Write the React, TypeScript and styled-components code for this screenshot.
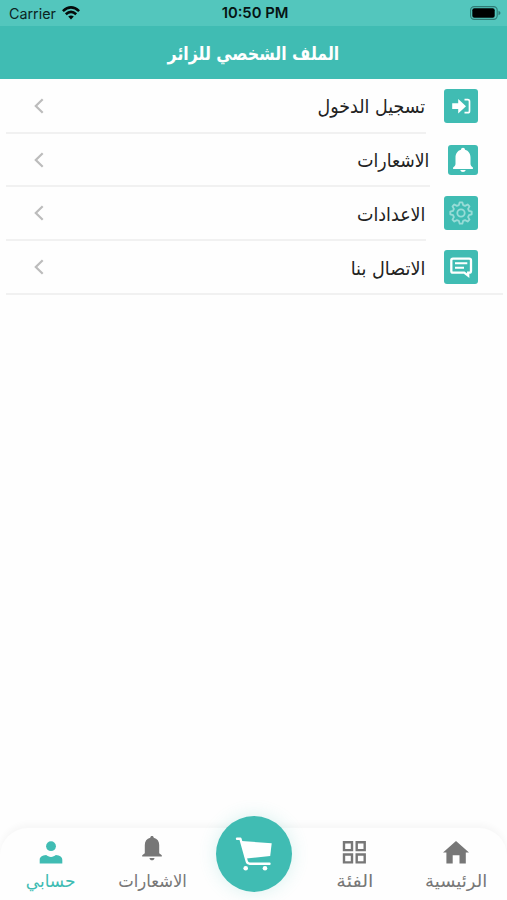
import type { ReactNode } from 'react';
import styled, { createGlobalStyle } from 'styled-components';

const TEAL = '#40bcb3';

const LoginIcon = () => (
  <svg width="34" height="34" viewBox="0 0 34 34">
    <path d="M8.200 14.200h6v-4.200l7.800 7.200-7.800 7.200v-4.300h-6z" fill="#fff" />
    <path d="M20.500 10.700h3.200q1.800 0 1.800 1.800v9.400q0 1.800-1.800 1.800h-3.200" fill="none" stroke="#fff" strokeWidth="1.700" />
  </svg>
);

const BellTileIcon = () => (
  <svg width="30" height="30" viewBox="0 0 30 30">
    <path
      d="M15 2.8c1.2 0 2 .8 2 2 3.7 1 5.5 4.1 5.5 8v6.1c0 1.5 1.2 2.5 2.4 3.6v1.5H5.1v-1.5c1.2-1.1 2.4-2.1 2.4-3.6v-6.1c0-3.9 1.8-7 5.5-8 0-1.2.8-2 2-2z"
      fill="#fff"
    />
    <path d="M12.3 25h5.4c-.3 1.2-1.3 2-2.7 2s-2.4-.8-2.7-2z" fill="#fff" />
  </svg>
);

const teeth = Array.from({ length: 8 }, (_, i) => {
  const point = (radius: number, degrees: number) => {
    const angle = ((i * 45 + degrees) * Math.PI) / 180;
    return `${(17 + radius * Math.sin(angle)).toFixed(2)},${(17 - radius * Math.cos(angle)).toFixed(2)}`;
  };
  return [point(8.2, -15), point(10.8, -7), point(10.8, 7), point(8.2, 15)].join(' ');
}).join(' ');

const GearIcon = () => (
  <svg width="34" height="34" viewBox="0 0 34 34" fill="none" stroke="#98dcd7" strokeWidth="1.8">
    <polygon points={teeth} strokeLinejoin="round" />
    <circle cx="17" cy="17" r="3.7" />
  </svg>
);

const MessageIcon = () => (
  <svg width="34" height="34" viewBox="0 0 34 34" fill="none" stroke="#fff">
    <path
      d="M9 8.700h16.300q1.700 0 1.700 1.700v10.500q0 1.700-1.700 1.700h-1.100v3l-4-3H9q-1.700 0-1.700-1.700V10.400q0-1.700 1.700-1.700z"
      strokeWidth="2.300"
    />
    <path d="M11 13.300h12.300M11 17.800h9" strokeWidth="1.900" />
  </svg>
);

const WifiIcon = () => (
  <svg width="18" height="14" viewBox="0 0 18 14" fill="none" stroke="#050b0a" strokeWidth="2.6">
    <path d="M.9 5.1q8.1-7.4 16.2 0" />
    <path d="M3.8 8.3q5.2-4.7 10.4 0" />
    <path d="M6.2 10.5q2.8-2.2 5.6 0L9 13.5z" fill="#050b0a" stroke="none" />
  </svg>
);

const BatteryIcon = () => (
  <svg width="31" height="14" viewBox="0 0 31 14">
    <rect x=".6" y=".6" width="26.6" height="12.8" rx="3.6" fill="none" stroke="#2f7b75" strokeWidth="1.1" />
    <rect x="2.3" y="2.2" width="22.4" height="9.5" rx="2" fill="#000" />
    <path d="M28.5 4.7q2 .7 2 2.3t-2 2.3z" fill="#2f7b75" />
  </svg>
);

const ChevronIcon = () => (
  <svg width="10" height="16" viewBox="0 0 10 16">
    <path d="M8.700 1.200 1.800 8l6.900 6.800" fill="none" stroke="#bcbcbc" strokeWidth="2.200" />
  </svg>
);

const HomeIcon = () => (
  <svg width="26" height="24" viewBox="0 0 26 24">
    <path d="M13 1 26 12.600h-3.200V23.500h-6.300v-8.300H9.700v8.300H3.400V12.600H0z" fill="currentColor" />
  </svg>
);

const GridIcon = () => (
  <svg width="25" height="24" viewBox="0 0 25 24" fill="none" stroke="currentColor" strokeWidth="2.4">
    <path d="M2 2.200h8v7.900H2zM14.700 2.200h8v7.900h-8zM2 14.500h8v7.900H2zM14.700 14.500h8v7.900h-8z" />
  </svg>
);

const BellIcon = () => (
  <svg width="20" height="25" viewBox="0 0 20 25" fill="currentColor">
    <path d="M10 0c1 0 1.700.7 1.700 1.700 3.600.9 5.500 3.600 5.500 7.200v8.400l2.600 1.900v1.300H.2v-1.300l2.600-1.900V8.900c0-3.600 1.900-6.300 5.500-7.200C8.300.7 9 0 10 0z" />
    <path d="M7.500 22h5c-.2 1.500-1.100 2.300-2.500 2.300S7.700 23.500 7.500 22z" />
  </svg>
);

const PersonIcon = () => (
  <svg width="24" height="23" viewBox="0 0 24 23" fill="currentColor">
    <circle cx="12" cy="5.200" r="4.900" />
    <path d="M.7 22.500v-3.600c0-2.600 2.300-4.500 6.500-4.800 1.300 1.200 2.900 1.800 4.800 1.800s3.500-.6 4.800-1.800c4.200.3 6.500 2.200 6.500 4.800v3.600z" />
  </svg>
);

const CartIcon = () => (
  <svg width="38" height="36" viewBox="0 0 38 36">
    <path
      d="M2 2.700h3.400l6.300 22.600q.6 2.400 3 2.400H34.500"
      fill="none"
      stroke="#fff"
      strokeWidth="2.400"
      strokeLinecap="round"
      strokeLinejoin="round"
    />
    <path d="M6.500 5 36.700 7.200 35.200 20l-23.900 2.600z" fill="#fff" />
    <circle cx="10.700" cy="32.200" r="2.300" fill="#fff" />
    <circle cx="30" cy="32.200" r="2.300" fill="#fff" />
  </svg>
);

interface MenuEntry {
  label: string;
  icon: ReactNode;
  height: number;
  tile: number;
  stretch: number;
}

const menu: MenuEntry[] = [
  { label: 'تسجيل الدخول', icon: <LoginIcon />, height: 55, tile: 34, stretch: 0.92 },
  { label: 'الاشعارات', icon: <BellTileIcon />, height: 53, tile: 30, stretch: 0.91 },
  { label: 'الاعدادات', icon: <GearIcon />, height: 54, tile: 34, stretch: 0.92 },
  { label: 'الاتصال بنا', icon: <MessageIcon />, height: 54, tile: 34, stretch: 0.93 },
];

const App = () => (
  <>
    <GlobalStyle />
    <Screen>
      <StatusBar>
        <Carrier>
          Carrier <WifiIcon />
        </Carrier>
        <Clock>10:50 PM</Clock>
        <BatteryIcon />
      </StatusBar>
      <Header>
        <Title $stretch={0.83}>الملف الشخصي للزائر</Title>
      </Header>
      <Menu>
        {menu.map((entry) => (
          <MenuRow key={entry.label} $height={entry.height}>
            <IconTile $size={entry.tile}>{entry.icon}</IconTile>
            <RowBody>
              <RowLabel $stretch={entry.stretch}>{entry.label}</RowLabel>
              <ChevronIcon />
            </RowBody>
          </MenuRow>
        ))}
      </Menu>
      <TabBar>
        <Tab>
          <TabIcon><HomeIcon /></TabIcon>
          <TabLabel $stretch={1.03}>الرئيسية</TabLabel>
        </Tab>
        <Tab>
          <TabIcon><GridIcon /></TabIcon>
          <TabLabel $stretch={1.1}>الفئة</TabLabel>
        </Tab>
        <CartSlot>
          <CartButton aria-label="السلة"><CartIcon /></CartButton>
        </CartSlot>
        <Tab>
          <TabIcon $lift={3}><BellIcon /></TabIcon>
          <TabLabel $stretch={0.94}>الاشعارات</TabLabel>
        </Tab>
        <Tab $active>
          <TabIcon><PersonIcon /></TabIcon>
          <TabLabel $stretch={0.97}>حسابي</TabLabel>
        </Tab>
      </TabBar>
    </Screen>
  </>
);

export default App;

const GlobalStyle = createGlobalStyle`
  * {
    box-sizing: border-box;
  }
  body {
    margin: 0;
    background: #fefefe;
  }
  svg {
    display: block;
    flex: none;
  }
`;

const Screen = styled.div`
  direction: rtl;
  width: 507px;
  height: 900px;
  display: flex;
  flex-direction: column;
  overflow: hidden;
  background: #fefefe;
  font-family: 'DejaVu Sans', sans-serif;
`;

const StatusBar = styled.div`
  direction: ltr;
  height: 26px;
  flex: none;
  display: grid;
  grid-template-columns: 1fr auto 1fr;
  align-items: center;
  padding: 0 6px 0 9px;
  background: #53c6bd;
  color: #0b2422;
  font-family: Inter, sans-serif;
  font-size: 14.3px;

  > svg {
    justify-self: end;
  }
`;

const Carrier = styled.div`
  display: flex;
  align-items: center;
  gap: 6px;
`;

const Clock = styled.div`
  color: #061413;
  font-size: 14.8px;
  font-weight: 600;
`;

const Header = styled.header`
  height: 53px;
  flex: none;
  display: flex;
  justify-content: center;
  align-items: center;
  background: ${TEAL};
`;

const Title = styled.h1<{ $stretch: number }>`
  margin: 0;
  color: #fff;
  font-size: 19px;
  font-weight: bold;
  line-height: 24px;
  white-space: nowrap;
  transform: scaleX(${({ $stretch }) => $stretch});
`;

const Menu = styled.div`
  margin: 0 4px 0 6px;
  border-bottom: 2px solid #f1f1f1;
`;

const RowBody = styled.div`
  flex: 1;
  align-self: stretch;
  display: flex;
  justify-content: space-between;
  align-items: center;
  padding-left: 28px;
  border-bottom: 2px solid #f1f1f1;
`;

const IconTile = styled.div<{ $size: number }>`
  width: ${({ $size }) => $size}px;
  height: ${({ $size }) => $size}px;
  flex: none;
  margin-bottom: 2px;
  border-radius: 3px;
  background: ${TEAL};
`;

const MenuRow = styled.div<{ $height: number }>`
  height: ${({ $height }) => $height}px;
  display: flex;
  align-items: center;
  gap: 18px;
  padding-right: 25px;

  &:last-child {
    height: 52px;
  }
  &:last-child ${IconTile} {
    margin-bottom: 0;
  }
  &:last-child ${RowBody} {
    border-bottom: 0;
  }
`;

const RowLabel = styled.span<{ $stretch: number }>`
  padding: 1px 1px 0 0;
  color: #222;
  font-size: 19px;
  line-height: 26px;
  white-space: nowrap;
  transform: scaleX(${({ $stretch }) => $stretch});
  transform-origin: right center;
`;

const TabBar = styled.nav`
  height: 72px;
  margin-top: auto;
  flex: none;
  display: grid;
  grid-template-columns: repeat(5, 1fr);
  border-radius: 28px 28px 0 0;
  background: #fefefe;
  box-shadow: 0 -4px 6px rgba(0, 0, 0, 0.03);
`;

const Tab = styled.div<{ $active?: boolean }>`
  display: flex;
  flex-direction: column;
  align-items: center;
  color: ${({ $active }) => ($active ? TEAL : '#777')};
`;

const TabIcon = styled.div<{ $lift?: number }>`
  height: 36px;
  display: flex;
  align-items: flex-end;
  padding-bottom: ${({ $lift = 0 }) => $lift}px;
`;

const TabLabel = styled.span<{ $stretch: number }>`
  margin-top: 5px;
  font-size: 17.5px;
  line-height: 24px;
  white-space: nowrap;
  transform: scaleX(${({ $stretch }) => $stretch});
`;

const CartSlot = styled.div`
  display: flex;
  justify-content: center;
`;

const CartButton = styled.button`
  width: 76px;
  height: 76px;
  flex: none;
  margin-top: -12px;
  padding: 0;
  display: flex;
  justify-content: center;
  align-items: center;
  border: 0;
  border-radius: 50%;
  background: ${TEAL};
  box-shadow: 0 0 18px rgba(64, 188, 179, 0.2);
`;
